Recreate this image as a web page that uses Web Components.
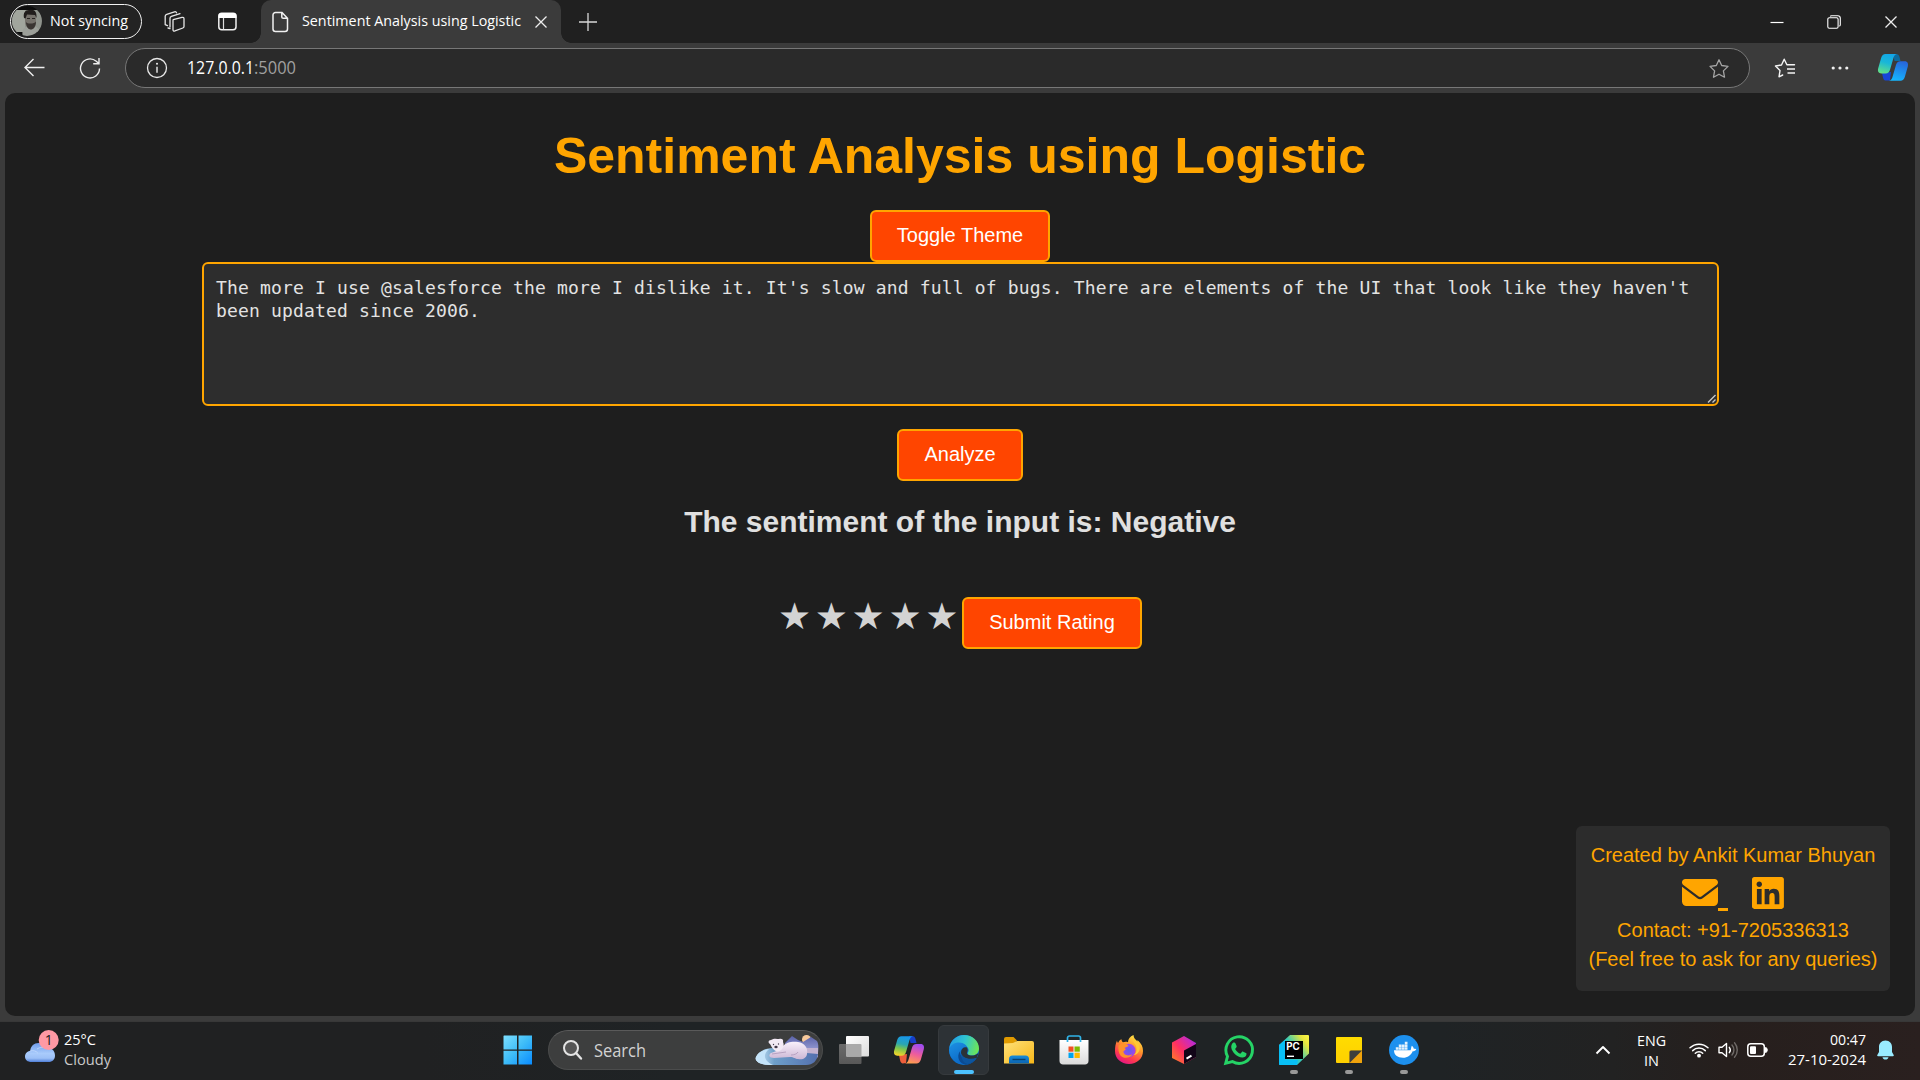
<!DOCTYPE html>
<html lang="en">
<head>
<meta charset="utf-8">
<title>Sentiment Analysis using Logistic</title>
<style>
html,body{margin:0;height:100%;background:#3b3b3b;overflow:hidden}
</style>
</head>
<body>
<desktop-screen></desktop-screen>
<script>
const ICONS = {
collections:[21,21,`<g fill="none" stroke="#e6e6e6" stroke-width="1.3" stroke-linejoin="round" stroke-linecap="round"><path d="M9.2 8.6l8.8-2.2c1.300-.3 2 .3 2 1.500v7.600c0 .8-.4 1.300-1.100 1.500l-8 2.900c-1.200.4-1.900 0-1.900-1.200V9.800c0-.7.200-1 .2-1.200z"/><path d="M6 16V7.300c0-1 .5-1.600 1.400-1.900L16 2.700"/><path d="M1.200 13.500V5.300c0-1 .5-1.700 1.500-2L10.500.8c1-.3 1.700 0 2 1M6 17.500l-2-.5M3.500 14.700l-2.300-1"/></g>`],
tabs:[19,19,`<rect x=".8" y="1.300" width="17.200" height="16.400" rx="3" fill="none" stroke="#f0f0f0" stroke-width="1.500"/><path d="M.5 6V4a3 3 0 0 1 3-3h12a3 3 0 0 1 3 3v2z" fill="#fff"/><path d="M5.500 6v11.500" stroke="#ddd" stroke-width="1.200"/>`],
doc:[17,22,`<path d="M3.500 1.500h6.500l5.500 5.700v10.800a2.500 2.500 0 0 1-2.500 2.500H3.500A2.500 2.500 0 0 1 1 18V4a2.500 2.500 0 0 1 2.500-2.500zM9.800 1.700v4.200c0 .9.500 1.400 1.400 1.400h4.100" fill="none" stroke="#f1f1f1" stroke-width="1.500"/>`],
x:[14,14,`<path d="M1.500 1.500l11 11M12.500 1.500l-11 11" stroke="#eee" stroke-width="1.300"/>`],
plus:[18,18,`<path d="M9 0v18M0 9h18" stroke="#d8d8d8" stroke-width="1.300"/>`],
min:[14,14,`<path d="M.5 7.500h13" stroke="#fff" stroke-width="1.200"/>`],
restore:[14,14,`<g fill="none" stroke="#fff" stroke-width="1.100"><rect x=".8" y="2.800" width="10.300" height="10.500" rx="1.500"/><path d="M3.300 1.500C3.500.9 4 .7 4.500.7h6.300c1.500 0 2.500 1 2.500 2.500v6.600c0 .6-.3 1.100-1 1.300"/></g>`],
back:[21,19,`<path d="M20.500 9.500H1.200M9.500 1L1 9.500 9.500 18" fill="none" stroke="#eee" stroke-width="1.400"/>`],
reload:[22,22,`<path d="M20.500 11.500a9.500 9.500 0 1 1-3.200-7.200l2.500 2.200M20 1v5.800h-5.800" fill="none" stroke="#eee" stroke-width="1.400"/>`],
info:[22,22,`<circle cx="11" cy="11" r="9.500" fill="none" stroke="#e8e8e8" stroke-width="1.300"/><path d="M11 9.700v6" stroke="#eee" stroke-width="1.400"/><circle cx="11" cy="6.700" r="1" fill="#eee"/>`],
star:[22,22,`<path d="M11 1.800l2.700 5.700 6.300.9-4.600 4.500 1.100 6.300-5.500-3-5.500 3 1.100-6.300L2 8.400l6.300-.9z" fill="none" stroke="#a5a5a5" stroke-width="1.300" stroke-linejoin="round"/>`],
favs:[22,22,`<path d="M8.700 18L5 19.800 6 13.600 1.500 9l6-1 2.700-5.800L12.900 7.800h7.600" fill="none" stroke="#f5f5f5" stroke-width="1.400" stroke-linejoin="round" stroke-linecap="round"/><path d="M13 12h8M13.500 16h7.500" stroke="#f5f5f5" stroke-width="1.500"/>`],
more:[18,6,`<g fill="#f0f0f0"><circle cx="2.200" cy="3" r="1.600"/><circle cx="9" cy="3" r="1.600"/><circle cx="15.800" cy="3" r="1.600"/></g>`],
copilotblue:[30,27,`<defs><linearGradient id="a" x1=".6" y1="0" x2=".3" y2="1"><stop stop-color="#13a6e8"/><stop offset=".45" stop-color="#19b7d8"/><stop offset="1" stop-color="#62e087"/></linearGradient><linearGradient id="b" x1=".6" y1="0" x2=".3" y2="1"><stop stop-color="#2667dc"/><stop offset="1" stop-color="#15b8ff"/></linearGradient></defs><path d="M15 0h3c2 0 3 1 3.500 3l1 4h-6z" fill="#0c6a9e"/><path d="M7.500 26.500c-1.500-.3-2-1-2.500-3L4 19l9-1-1 8.500z" fill="#1745d8"/><path d="M7.500 0H19c-2.300.5-3 2-3.700 4.500l-3.200 11c-.8 2.500-2 4-4.600 4H3.300C.6 19.500-.6 17.300.2 14.300l3-10.500C3.900 1.400 5.300 0 7.500 0z" fill="url(#a)"/><path d="M22.500 26.800H11c2.300-.5 3-2 3.700-4.500l3.200-11c.8-2.500 2-4 4.600-4h4.200c2.700 0 3.900 2.200 3.100 5.200l-3 10.500c-.7 2.400-2.100 3.800-4.300 3.800z" fill="url(#b)"/>`],
copilot:[30,28,`<defs><linearGradient id="a" x1=".5" y1="0" x2=".3" y2="1"><stop stop-color="#1797ec"/><stop offset=".4" stop-color="#2aa6b2"/><stop offset=".65" stop-color="#7cc64c"/><stop offset="1" stop-color="#f6d52a"/></linearGradient><linearGradient id="b" x1=".6" y1="0" x2=".3" y2="1"><stop stop-color="#a04cf0"/><stop offset=".5" stop-color="#ee5d9c"/><stop offset="1" stop-color="#ffa04c"/></linearGradient></defs><path d="M15 0h3c2 0 3 1 3.500 3l1 4h-6z" fill="#173fc9"/><path d="M8.500 27.500C7 27 6.500 26 6 24l-1-5 8-1-1 9z" fill="#ee5f3c"/><path d="M7.500.2H19c-2.300.5-3 2-3.700 4.500l-3.200 11c-.8 2.500-2 4-4.600 4H3.300C.6 19.700-.6 17.500.2 14.500l3-10.500C3.900 1.600 5.300.2 7.500.2z" fill="url(#a)"/><path d="M22.500 27.500H11c2.300-.5 3-2 3.700-4.500l3.200-11c.8-2.500 2-4 4.600-4h4.200c2.700 0 3.900 2.200 3.100 5.200l-3 10.500c-.7 2.400-2.100 3.800-4.300 3.800z" fill="url(#b)"/>`],
avatar:[30,30,`<defs><clipPath id="c"><circle cx="15" cy="15" r="15"/></clipPath></defs><g clip-path="url(#c)"><rect width="30" height="30" fill="#0c0c0c"/><rect y="4" width="30" height="22" fill="#8f938c"/><rect y="4" width="13" height="22" fill="#a1a59d"/><path d="M11 31c-2-7 1-10 5-11h5c5 1 8 4 8 11z" fill="#9c9f99"/><path d="M13 8h11v8c0 4-2 7.500-5 7.500s-6-4-6-8z" fill="#75716b"/><path d="M12 12c-1-5 1-8 5-8 5-1 8 1 7.500 8l-1.500-3-8-.5-1.500 4z" fill="#211d1c"/><path d="M14 16c1 1 2 1.500 4.500 1.500S23 17 24 15.500c0 4-2 8-5 8s-5-3.500-5-7.500z" fill="#3a3532"/><path d="M15 12.500h3M20 12.500h3" stroke="#282422"/></g>`],
mail:[36,27,`<path transform="scale(.0703) translate(0 -64)" fill="orange" d="M48 64C21.500 64 0 85.500 0 112c0 15.100 7.100 29.300 19.200 38.400L236.800 313.600c11.400 8.500 27 8.500 38.400 0L492.800 150.400c12.100-9.100 19.200-23.300 19.200-38.400c0-26.500-21.500-48-48-48H48zM0 176V384c0 35.300 28.700 64 64 64H448c35.300 0 64-28.700 64-64V176L294.400 339.200c-22.800 17.100-54 17.100-76.800 0L0 176z"/>`],
linkedin:[32,32,`<path transform="scale(.0712) translate(0 -32)" fill="orange" d="M416 32H31.900C14.300 32 0 46.500 0 64.300v383.400C0 465.500 14.300 480 31.900 480H416c17.600 0 32-14.500 32-32.300V64.300c0-17.800-14.400-32.300-32-32.300zM135.400 416H69V202.200h66.500V416zm-33.200-243c-21.300 0-38.500-17.300-38.500-38.500S80.900 96 102.200 96c21.200 0 38.500 17.300 38.500 38.500 0 21.300-17.200 38.500-38.500 38.500zm282.100 243h-66.400V312c0-24.800-.5-56.700-34.500-56.700-34.600 0-39.900 27-39.900 54.900V416h-66.400V202.200h63.700v29.200h.9c8.900-16.800 30.600-34.500 62.900-34.500 67.200 0 79.700 44.300 79.700 101.900V416z"/>`],
weather:[34,32,`<defs><linearGradient id="w" x1="0" y1="0" x2="0" y2="1"><stop stop-color="#6f9cec"/><stop offset=".55" stop-color="#a9cbfb"/><stop offset=".8" stop-color="#9cc0f7"/><stop offset="1" stop-color="#4f7fd8"/></linearGradient></defs><path d="M6.500 32C2.500 32 0 29.800 0 26.500c0-3 2.200-5.300 5.200-5.800C5.800 16 9 13 13.500 13c3.500 0 6.500 1.800 8 5 5-.8 8.500 2.500 8.500 7.500 0 4-2.500 6.500-6.500 6.500z" fill="url(#w)"/><path d="M5.200 21c3-1 6 0 7.500 2M12 19c3-2 6-2 9.500-1" stroke="#d0e2ff" stroke-width="1" fill="none" opacity=".6"/><circle cx="23.700" cy="10" r="10" fill="#ff99a4"/><text x="23.700" y="15" text-anchor="middle" font-family="Open Sans" font-size="14" fill="#1b1b1b">1</text>`],
start:[30,30,`<defs><linearGradient id="s" x1="0" y1="0" x2="1" y2="1" gradientUnits="userSpaceOnUse" gradientTransform="scale(29)"><stop stop-color="#7fe0ff"/><stop offset=".5" stop-color="#3fbdf8"/><stop offset="1" stop-color="#0a8cff"/></linearGradient></defs><path d="M1 .5h13v14H.5V1zM15.500.5h13.500v14H15.500zM.5 15.800H14v13.700H.5zM15.500 15.800H29v13.700H15.500z" fill="url(#s)"/>`],
search:[19,20,`<circle cx="8" cy="8" r="7" fill="#555" stroke="#e4e4e4" stroke-width="2"/><path d="M13 13l5 5.500" stroke="#e4e4e4" stroke-width="2.400" stroke-linecap="round"/>`],
bear:[64,32,`<defs><linearGradient id="r" x1="0" x2="1"><stop stop-color="#d7efff"/><stop offset=".3" stop-color="#6e9fc9"/><stop offset="1" stop-color="#536fae"/></linearGradient><linearGradient id="m" x1="0" y1="0" x2="0" y2="1"><stop stop-color="#5a62a8"/><stop offset="1" stop-color="#a1a5da"/></linearGradient><linearGradient id="f" x1="0" y1="0" x2="0" y2="1"><stop stop-color="#f9f1fb"/><stop offset="1" stop-color="#cdb7d5"/></linearGradient></defs><circle cx="51.500" cy="5.500" r="4.500" fill="#f7c99b"/><path d="M30 9l7-7 6 4 5 2 8-5 6 4c1.500 2 1.700 6 1 12H30z" fill="url(#m)"/><path d="M50 14h13v8c0 3-6 4-13 3z" fill="#c3b2d0"/><path d="M1 23c2-5 9-9 17-9l34 5 11 1c-1 7-5 11-12 11H14C6 31-1 27 1 23z" fill="url(#r)"/><path d="M1 23c2-4 8-7.500 13-8-6 5-6 11 4 16h-4C6 31-1 27 1 23z" fill="#c5e4fa"/><path d="M28 12c3-4 10-5 15-4 7 1 10 6 9 12-.5 4-4 6-9 5-3 0-4-2-8-2l-16 1c-5 0-6-3-3-5l8-3z" fill="url(#f)"/><path d="M15 10c-2-1-2-4 1-4 3-2 6-1 8-1 2-1 5 0 4 3 2 4-1 9-5 9.500-4 0-6-4-8-7.500z" fill="#f3eaf5"/><path d="M17 20l14-2M36 21c3 0 6-1 7-3" stroke="#b7a2c1" fill="none"/><g fill="#443a4c"><circle cx="18.500" cy="10.500" r=".7"/><circle cx="23.500" cy="10" r=".7"/><ellipse cx="21" cy="13" rx="1.700" ry="1.200"/></g>`],
taskview:[30,28,`<defs><linearGradient id="t" x1="0" y1="0" x2="1" y2="1"><stop stop-color="#fff"/><stop offset="1" stop-color="#dcdcdc"/></linearGradient><linearGradient id="u" x1="0" y1="0" x2="0" y2="1"><stop stop-color="#6b6b6b"/><stop offset="1" stop-color="#585858"/></linearGradient></defs><rect y="8" width="22.500" height="20" rx="1" fill="url(#u)"/><rect x="7" y="0" width="23" height="20.500" rx="1" fill="url(#t)"/><path d="M7 8h14.500a1 1 0 0 1 1 1v11.500H8a1 1 0 0 1-1-1z" fill="#a9a9a9"/>`],
edge:[30,30,`<defs><linearGradient id="e" x1="0" y1=".3" x2="1" y2=".5"><stop stop-color="#239ce6"/><stop offset=".5" stop-color="#2fc5d0"/><stop offset="1" stop-color="#6de657"/></linearGradient><linearGradient id="g" x1="0" y1="0" x2=".6" y2="1"><stop stop-color="#1d91e4"/><stop offset="1" stop-color="#0a66c4"/></linearGradient></defs><circle cx="15" cy="15" r="15" fill="#0d72d0"/><path d="M.3 13C1.500 5.500 7.500 0 15 0c8.500 0 15 6 15 13.500 0 4-3 7-7 7-3.500 0-5-1.500-4-3 2-3-.5-7-5-7C8 10.500 2.500 11 .3 13z" fill="url(#e)"/><path d="M0 15C1 10 5 7.500 10 7.500c5 0 8.500 3 8.700 6.500-4-3-7.700 0-7.500 4 .2 6 6 9.500 12 8.500A15 15 0 0 1 0 15z" fill="url(#g)"/><path d="M11.200 16c-1 6 6 12.500 16.300 7A15 15 0 0 1 17 30c-7-1-10-9-5.800-14z" fill="#0b4b93"/><path d="M18 12.500c.8 1.500.9 3 .3 4.500-1.200 2 1 3.500 4.700 3.500 2 0 4-.5 6.500-2.500l-1.700 5c-6 3-15.800.5-15.800-5.500 0-4 3-6 6-5z" fill="#2b3237"/><path d="M12.200 18.500c1.800 5 9 6.500 15.300 4.200-2 3-5 5.800-9 6.300-4-1-6.500-5-6.300-10.500z" fill="#0c559f"/>`],
explorer:[30,28,`<defs><linearGradient id="x" x1="0" y1="0" x2="1" y2="1"><stop stop-color="#ffe17a"/><stop offset="1" stop-color="#f7b719"/></linearGradient><linearGradient id="y" x1="0" y1="0" x2="0" y2="1"><stop stop-color="#168cdb"/><stop offset="1" stop-color="#0b63b0"/></linearGradient></defs><path d="M0 3a2 2 0 0 1 2-2h7.500L13 4.500 10 8H0z" fill="#e09a00"/><path d="M0 7.500l9-.5 4-2h15a2 2 0 0 1 2 2v20.500H0z" fill="url(#x)"/><path d="M5 27.500V23A3.500 3.500 0 0 1 8.500 19.500h13A3.500 3.500 0 0 1 25 23v4.500z" fill="url(#y)"/><path d="M8.500 23.500h13" stroke="#08406f" stroke-width="1.400"/>`],
store:[30,30,`<defs><linearGradient id="z" x1="0" y1="0" x2="0" y2="1"><stop stop-color="#fff"/><stop offset="1" stop-color="#dadada"/></linearGradient></defs><path d="M.5 5h29v21c0 2-1.500 3.500-3.500 3.500H4C2 29.500.5 28 .5 26z" fill="url(#z)"/><path d="M8.500 7V3a2 2 0 0 1 2-2h9a2 2 0 0 1 2 2v4" fill="none" stroke="#30b4e8" stroke-width="1.700"/><path d="M9.500 11.500h5v5.200h-5z" fill="#f25022"/><path d="M15.500 11.500h5.300v5.200h-5.300z" fill="#7fba00"/><path d="M9.500 17.700h5V23h-5z" fill="#00a4ef"/><path d="M15.500 17.700h5.300V23h-5.300z" fill="#ffb900"/>`],
firefox:[30,30,`<defs><linearGradient id="h" x1=".8" y1="0" x2=".3" y2="1"><stop stop-color="#fff04a"/><stop offset=".4" stop-color="#ff9a2b"/><stop offset=".75" stop-color="#ff3a4f"/><stop offset="1" stop-color="#e31587"/></linearGradient><radialGradient id="i"><stop stop-color="#5b5ff2"/><stop offset="1" stop-color="#a544e6"/></radialGradient></defs><path d="M3 5.500c0 1 .3 1.800 1 2.500C5 6 6 4.800 7.500 4.200c0 1.300.6 2.200 1.500 3 1.500-.6 3.500-.7 5 0C14 4 16 1.500 19.500 0c0 3 2 4.500 4 6.500V5c4 3.500 5.500 7 5.500 11 0 7.500-6 13-14 13S1 23.500 1 16c0-3.500.5-7.500 2-10.500z" fill="url(#h)"/><circle cx="14.800" cy="15.500" r="6.700" fill="url(#i)"/><path d="M4.500 10.500C8 7.500 13 8 14.500 11c-1 1-3 1-4 2 2 1.500 1 2-1 3-.5 4 5 6 9 3-2 4.500-9 5-12 1.500-2-2.500-2.500-7-2-10z" fill="#ff922b"/><path d="M19.500 3c-2 4 3 5 3 11 0 3-1 5-3 6 5-.5 7-5 6-9-1-3.500-4-5-6-8z" fill="#ffc933"/>`],
toolbox:[30,30,`<defs><linearGradient id="j" x1="0" y1="1" x2="1" y2="0"><stop stop-color="#ff8a1e"/><stop offset=".45" stop-color="#ff2f63"/><stop offset=".8" stop-color="#c52bc5"/><stop offset="1" stop-color="#7d2ae0"/></linearGradient></defs><path d="M15 1l12 7v14l-12 7-12-6V7.500z" fill="url(#j)"/><path d="M15 15.500L27 9v13l-12 7z" fill="#120518"/><path d="M17.500 23.700l5-3" stroke="#fff" stroke-width="2"/>`],
whatsapp:[30,30,`<path d="M1.700 28.300l1.800-6.900A13.300 13.300 0 1 1 8.400 26.500z" fill="none" stroke="#25d366" stroke-width="2.900"/><path d="M10 7.500c.8 0 1.200.2 1.500.9l1.100 2.700c.2.500 0 1-.3 1.400l-1.200 1.500c1.200 2.200 2.900 3.700 5.200 4.800l1.600-1.800c.4-.4.800-.5 1.300-.3l2.700 1.300c.6.300.7.700.6 1.300-.3 2.200-2.200 3.300-4.200 3.200-5.300-.4-10.300-5.300-11-9.800-.3-2.500 1-5.200 2.700-5.200z" fill="#25d366"/>`],
pycharm:[30,30,`<defs><linearGradient id="k" x1="0" y1=".7" x2="1" y2="0"><stop stop-color="#17c4e8"/><stop offset=".45" stop-color="#38cbb5"/><stop offset=".8" stop-color="#e9e63c"/><stop offset="1" stop-color="#fcf84a"/></linearGradient></defs><path d="M11 0h18a1 1 0 0 1 1 1v17.500L18 30H1a1 1 0 0 1-1-1V10z" fill="url(#k)"/><path d="M0 10l6-5v20h13l-1 5H1a1 1 0 0 1-1-1z" fill="#08bff5"/><path d="M6 6h18v18H6z" fill="#000"/><text x="7.200" y="15" font-family="Inter,Liberation Sans" font-weight="700" font-size="9.800" textLength="13.500" fill="#fff">PC</text><path d="M8 21.300h7" stroke="#fff" stroke-width="1.400"/>`],
sticky:[30,30,`<defs><linearGradient id="l" x1="0" y1="0" x2="0" y2="1"><stop stop-color="#ffdc00"/><stop offset="1" stop-color="#ffd000"/></linearGradient></defs><rect x="2" y="2" width="26" height="26" rx="1" fill="url(#l)"/><path d="M15.500 28V15.500H28V27a1 1 0 0 1-1 1z" fill="#f0a30c"/><path d="M15.500 28V17a1.500 1.500 0 0 1 1.500-1.500h11z" fill="#3d3d3d"/>`],
docker:[30,30,`<circle cx="15" cy="15" r="15" fill="#1d90ee"/><path d="M5 15.300h16.500c.7-.6.500-3 1.300-4.500 1.400.9 1.800 1.900 2 2.900 1 0 1.900.1 2.500.5-.8 1.500-2 2-3.600 2-1.800 4-5 6.500-9.700 6.500-5.500 0-9-2.500-9-7.400z" fill="#fff"/><path d="M6.800 12.300h2.700v2.500H6.800zM9.800 12.300h2.700v2.500H9.800zM12.800 12.300h2.700v2.500h-2.700zM15.800 12.300h2.700v2.500h-2.700zM9.800 9.500h2.700V12H9.800zM12.800 9.500h2.700V12h-2.700zM15.800 9.500h2.700V12h-2.700zM15.800 6.800h2.700v2.500h-2.700z" fill="#fff" opacity=".88"/>`],
chevron:[16,10,`<path d="M1.500 8.500L8 2l6.500 6.500" fill="none" stroke="#fff" stroke-width="1.900" stroke-linejoin="round"/>`],
wifi:[20,16,`<g fill="none" stroke="#fff" stroke-width="1.500" stroke-linecap="round"><path d="M1 5.800a13 13 0 0 1 18 0"/><path d="M3.700 8.600a9 9 0 0 1 12.600 0"/><path d="M6.300 11.300a5.200 5.200 0 0 1 7.400 0"/></g><circle cx="10" cy="13.700" r="1.900" fill="#fff"/>`],
volume:[20,18,`<g fill="none" stroke-linecap="round" stroke-width="1.400"><path d="M1 6.300h3L8.500 2.500v13L4 11.700H1z" stroke="#fff" stroke-linejoin="round"/><path d="M11.300 6.300a4.500 4.500 0 0 1 0 5.400" stroke="#fff"/><path d="M14 4a7.500 7.500 0 0 1 0 10M16.500 1.700a11 11 0 0 1 0 14.600" stroke="#6e6966"/></g>`],
battery:[21,14,`<rect x=".8" y=".8" width="16.500" height="12.400" rx="3" fill="none" stroke="#fff" stroke-width="1.500"/><rect x="3" y="3.200" width="6" height="7.700" rx="1" fill="#fff"/><path d="M18.500 4.500c1.300.3 1.700 1 1.700 2.500s-.4 2.200-1.700 2.500z" fill="#fff" stroke="#fff"/>`],
bell:[17,20,`<path d="M8.500.5c4.200 0 6.500 3 6.500 6.500v5l1.700 3c.3.700 0 1.200-.7 1.200H1c-.7 0-1-.5-.7-1.200L2 12V7C2 3.500 4.300.5 8.500.5zM5.500 17.200h6c-.3 1.500-1.500 2.300-3 2.300s-2.700-.8-3-2.300z" fill="#99ebff"/>`]
};
const define = (name, html, init) => {
  const t = document.createElement('template');
  t.innerHTML = html;
  customElements.define(name, class extends HTMLElement {
    connectedCallback() {
      if (this.shadowRoot) return;
      this.attachShadow({mode:'open'}).append(t.content.cloneNode(true));
      if (init) init.call(this, this.shadowRoot);
    }
  });
};

/* A single inline icon. */
define('ui-icon', `<style>:host{display:block;flex:none}svg{display:block;overflow:visible}</style>`, function(root){
  const [w,h,body] = ICONS[this.getAttribute('name')];
  const box = document.createElement('div');
  box.innerHTML = `<svg width="${w}" height="${h}" viewBox="0 0 ${w} ${h}">${body}</svg>`;
  root.append(box.firstChild);
});

/* A line of text condensed or widened to the width given in "w". */
define('fit-text', `<style>:host{display:block;flex:none;white-space:nowrap}span{display:inline-block;transform-origin:0 50%}</style><span><slot></slot></span>`, function(root){
  const w = +this.getAttribute('w'), s = root.querySelector('span');
  this.style.width = w + 'px';
  s.style.transform = `scaleX(${w / s.getBoundingClientRect().width})`;
});

define('profile-pill', `<style>:host{display:flex;box-sizing:border-box;width:132px;height:35px;flex:none;align-items:center;gap:8px;padding:0 0 1px 1px;border:1.500px solid #f2f2f2;border-radius:18px;background:#232323;color:#fff;font:15px/20px "Open Sans",sans-serif}fit-text{margin-bottom:2px}</style><ui-icon name="avatar"></ui-icon><fit-text w="78"><slot></slot></fit-text>`);

define('browser-tab', `<style>
:host{display:flex;align-items:center;box-sizing:border-box;width:300px;height:43px;flex:none;padding:0 12px 0 11px;background:#3b3b3b;border-radius:10px 10px 0 0;color:#fff;font:15px/20px "Open Sans",sans-serif;position:relative}
:host::before,:host::after{content:"";position:absolute;bottom:0;width:10px;height:10px}
:host::before{left:-10px;background:radial-gradient(circle at 0 0,transparent 9.500px,#3b3b3b 10px)}
:host::after{right:-10px;background:radial-gradient(circle at 100% 0,transparent 9.500px,#3b3b3b 10px)}
fit-text{margin:0 13px 3px}
</style><ui-icon name="doc"></ui-icon><fit-text w="219"><slot></slot></fit-text><ui-icon name="x"></ui-icon>`);

define('title-bar', `<style>
:host{display:flex;align-items:center;height:43px;background:#202020;padding:0 22px 0 10px}
.c{margin-left:22px}.t{margin:0 24px 0 33px}.p{margin-left:18px}
.w{display:flex;gap:43px;margin-left:auto;align-items:center}
</style><profile-pill>Not syncing</profile-pill><ui-icon class="c" name="collections"></ui-icon><ui-icon class="t" name="tabs"></ui-icon><browser-tab>Sentiment Analysis using Logistic</browser-tab><ui-icon class="p" name="plus"></ui-icon>
<div class="w"><ui-icon name="min"></ui-icon><ui-icon name="restore"></ui-icon><ui-icon name="x"></ui-icon></div>`);

define('address-bar', `<style>
:host{display:flex;align-items:center;box-sizing:border-box;width:1625px;height:40px;flex:none;border:1px solid #777;border-radius:20px;background:#2a2a2a;padding:0 19px 0 20px;font:17.300px/24px "Open Sans",sans-serif}
.h{color:#fff;margin-left:19px}.p{color:#a0a0a0}.s{margin:2px 0 0 auto}
</style><ui-icon name="info"></ui-icon><fit-text class="h" w="67">127.0.0.1</fit-text><fit-text class="p" w="42">:5000</fit-text><ui-icon class="s" name="star"></ui-icon>`);

define('nav-bar', `<style>
:host{display:flex;align-items:center;height:50px;background:#3b3b3b;padding:0 12px 0 24px}
.b{margin-bottom:2px}.r{margin:0 24px 0 34px}.f{margin-left:24px}.m{margin:0 29px 0 35px}.c{margin-bottom:1px}
</style><ui-icon class="b" name="back"></ui-icon><ui-icon class="r" name="reload"></ui-icon><address-bar></address-bar><ui-icon class="f" name="favs"></ui-icon><ui-icon class="m" name="more"></ui-icon><ui-icon class="c" name="copilotblue"></ui-icon>`);

define('flame-button', `<style>
:host{display:block;flex:none}
button{display:flex;align-items:center;justify-content:center;box-sizing:border-box;width:100%;height:52px;margin:0;border:2px solid orange;border-radius:6px;background:#ff4500;color:#fff;font:20px/24px "Liberation Sans",Arial,sans-serif;padding:0 0 3px}
</style><button><slot></slot></button>`);

define('review-input', `<style>
:host{display:block;position:relative}
textarea{display:block;box-sizing:border-box;width:1517px;height:144px;margin:0;padding:12px 12px 12px 12.600px;border:2px solid orange;border-radius:6px;background:#2d2d2d;color:#e3e3e3;font:18px/23px "DejaVu Sans Mono",monospace;letter-spacing:.158px;resize:none;outline:0;overflow:hidden}
svg{position:absolute;right:3px;bottom:3px}
</style><textarea></textarea><svg width="9" height="9"><path d="M1 8.500L8.500 1M5.500 8.500L8.500 5.500" stroke="#c8c8c8" stroke-width="1.400"/></svg>`, function(root){ root.querySelector('textarea').value = this.getAttribute('value'); });

define('star-rating', `<style>
:host{display:flex;height:52px;font:37px/40px "DejaVu Sans",sans-serif;color:#d3d3d3}
span{display:block;width:32.400px;margin-right:4.400px;text-align:center}
</style><span>★</span><span>★</span><span>★</span><span>★</span><span>★</span>`);

define('contact-card', `<style>
:host{display:flex;flex-direction:column;align-items:center;box-sizing:border-box;width:314px;height:165px;padding-top:15px;border-radius:6px;background:#2c2c2c;color:orange;font:20px/29px "Liberation Sans",Arial,sans-serif;white-space:nowrap}
.i{display:flex;height:46px;box-sizing:border-box;padding-top:6.500px}
.i ui-icon:first-child{margin-top:2.500px}
u{width:10px;height:3px;margin:31px 24px 0 0;background:orange}
</style><div>Created by Ankit Kumar Bhuyan</div><div class="i"><ui-icon name="mail"></ui-icon><u></u><ui-icon name="linkedin"></ui-icon></div><div>Contact: +91-7205336313</div><div>(Feel free to ask for any queries)</div>`);

define('sentiment-page', `<style>
:host{display:flex;flex-direction:column;align-items:center;box-sizing:border-box;height:923px;margin:0 5px;padding:34px 25px 25px;background:#1e1e1e;border-radius:10px;font-family:"Liberation Sans",Arial,sans-serif}
h1{margin:0 0 25px;font-size:50px;line-height:58px;color:orange}
h2{margin:23px 0 57px;font-size:30px;line-height:36px;color:#e0e0e0}
.t{width:180px}.a{width:126px;margin-top:23px}.s{width:180px}
.r{display:flex}
contact-card{margin-top:auto;align-self:flex-end}
</style><h1>Sentiment Analysis using Logistic</h1><flame-button class="t">Toggle Theme</flame-button><review-input value="The more I use @salesforce the more I dislike it. It's slow and full of bugs. There are elements of the UI that look like they haven't been updated since 2006."></review-input><flame-button class="a">Analyze</flame-button><h2>The sentiment of the input is: Negative</h2><div class="r"><star-rating></star-rating><flame-button class="s">Submit Rating</flame-button></div><contact-card></contact-card>`);

define('task-item', `<style>
:host{display:grid;place-items:center;box-sizing:border-box;width:51px;height:50px;margin:0 2px;border-radius:6px;border:1px solid transparent;position:relative}
:host([active]){background:#2d3236;border-color:#363a3d}
:host([active])::after,:host([open])::after{content:"";position:absolute;bottom:0;width:8px;height:4px;border-radius:2px;background:#999}
:host([active])::after{width:20px;background:#4cc2ff}
</style>`, function(root){
  const i = document.createElement('ui-icon');
  i.setAttribute('name', this.getAttribute('icon'));
  root.append(i);
});

define('search-box', `<style>
:host{display:flex;align-items:center;box-sizing:border-box;width:275px;height:40px;flex:none;border:1px solid #4b4c4c;border-top-color:#5a5a5a;border-radius:20px;background:#3d3e3e;padding:0 3px 0 14px;color:#d2d2d2;font:17.500px/24px "Open Sans",sans-serif}
fit-text{margin:0 0 1px 12px}.b{margin-left:auto}
</style><ui-icon name="search"></ui-icon><fit-text w="52">Search</fit-text><ui-icon class="b" name="bear"></ui-icon>`);

define('task-bar', `<style>
:host{display:flex;align-items:center;box-sizing:border-box;height:59px;padding:0 26px 2px 25px;border-top:1px solid #383838;background:linear-gradient(90deg,#202122 0,#202122 22%,#1f2325 35%,#1f2325 75%,#222222 84%,#261f1d 90%,#2a201f 100%);color:#fff;font:15px/20px "Open Sans",sans-serif}
.w{display:flex;gap:5px;width:477.500px;padding-bottom:2px}
.w ui-icon{margin-top:1px}.g{color:#c9c9c9}
.k{margin:0 15.500px 0 0}
.a{display:flex;margin-left:3px}
.n{display:flex;align-items:center;margin-left:auto}
.l{display:flex;flex-direction:column;align-items:center;margin:0 23px 0 26px}
.d{display:flex;flex-direction:column;align-items:flex-end;margin:0 11px 2px 20px}
.v{margin:0 9px 0 9px}
</style>
<div class="w"><ui-icon name="weather"></ui-icon><div><fit-text w="32">25°C</fit-text><fit-text class="g" w="47">Cloudy</fit-text></div></div>
<ui-icon class="k" name="start"></ui-icon><search-box></search-box>
<div class="a"><task-item icon="taskview"></task-item><task-item icon="copilot"></task-item><task-item icon="edge" active></task-item><task-item icon="explorer"></task-item><task-item icon="store"></task-item><task-item icon="firefox"></task-item><task-item icon="toolbox"></task-item><task-item icon="whatsapp"></task-item><task-item icon="pycharm" open></task-item><task-item icon="sticky" open></task-item><task-item icon="docker" open></task-item></div>
<div class="n"><ui-icon name="chevron"></ui-icon><div class="l"><fit-text w="29">ENG</fit-text><fit-text w="15">IN</fit-text></div><ui-icon name="wifi"></ui-icon><ui-icon class="v" name="volume"></ui-icon><ui-icon name="battery"></ui-icon><div class="d"><fit-text w="36">00:47</fit-text><fit-text w="78">27-10-2024</fit-text></div><ui-icon name="bell"></ui-icon></div>`);

define('desktop-screen', `<style>
:host{display:flex;flex-direction:column;width:1920px;height:1080px;background:#3b3b3b}
task-bar{margin-top:auto}
</style><title-bar></title-bar><nav-bar></nav-bar><sentiment-page></sentiment-page><task-bar></task-bar>`);
</script>
</body>
</html>
